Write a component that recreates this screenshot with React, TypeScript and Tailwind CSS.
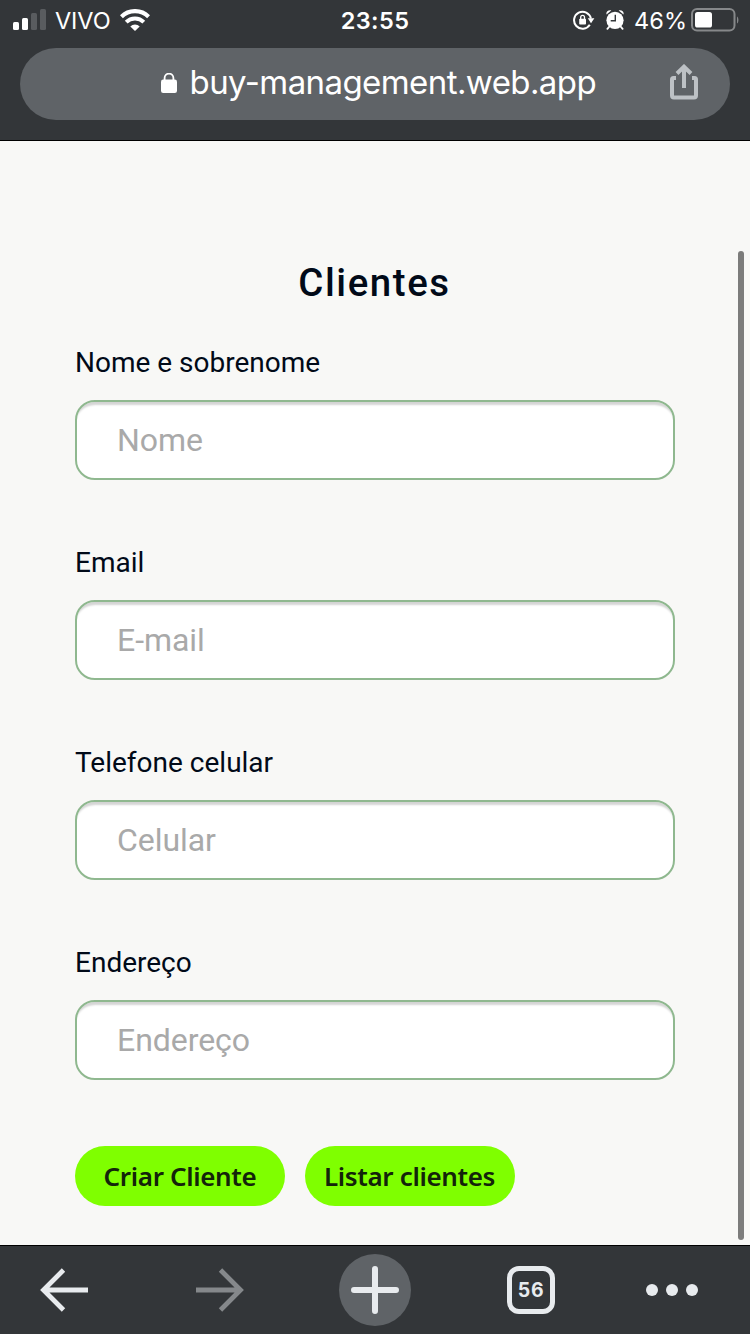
import React from "react";

type FieldProps = { id: string; label: string; placeholder: string };

function Field({ id, label, placeholder }: FieldProps) {
  return (
    <div className="flex h-[200px] flex-col">
      <label htmlFor={id} className="h-[60px] pt-px text-[28px] leading-[44px] whitespace-nowrap text-[#010a18]">
        {label}
      </label>
      <input
        id={id}
        placeholder={placeholder}
        className="h-20 w-[600px] rounded-[20px] border-2 border-[#8fb88f] bg-white px-10 text-[32px] tracking-[-0.05px] shadow-[inset_0_5px_2px_-2px_rgba(0,0,0,0.17)] outline-none placeholder:text-[#a9a9a9]"
      />
    </div>
  );
}

function SignalIcon() {
  return (
    <svg width="34" height="22" viewBox="0 0 34 22" className="shrink-0">
      <rect x="0" y="13" width="6" height="8" rx="1.5" fill="#fff" />
      <rect x="9" y="9" width="6" height="12" rx="1.5" fill="#fff" />
      <rect x="18" y="4" width="6" height="17" rx="1.5" fill="#595c5f" />
      <rect x="27" y="0" width="6" height="21" rx="1.5" fill="#595c5f" />
    </svg>
  );
}

function WifiIcon() {
  return (
    <svg width="30" height="23" viewBox="0 0 30 23" className="shrink-0" fill="none">
      <path d="M1.4 7.700a19.300 19.300 0 0 1 27.200 0" stroke="#fff" strokeWidth="4.200" />
      <path d="M6.200 13.100a12.400 12.400 0 0 1 17.600 0" stroke="#fff" strokeWidth="3.900" />
      <path d="M10.300 17.400a6.600 6.600 0 0 1 9.400 0L15 22.100z" fill="#fff" />
    </svg>
  );
}

function RotationLockIcon() {
  return (
    <svg width="22" height="20" viewBox="0 0 22 20" className="shrink-0" fill="none">
      <path d="M16.8 14.7A8.500 8.500 0 1 1 17.900 8.500" stroke="#fff" strokeWidth="2" />
      <path d="M14.8 8.300h6.600l-3.400 5z" fill="#fff" />
      <rect x="6.200" y="8.700" width="6.800" height="5.800" rx="0.8" fill="#fff" />
      <path d="M7.700 9V7.200a1.900 1.900 0 0 1 3.800 0V9" stroke="#fff" strokeWidth="1.3" />
    </svg>
  );
}

function AlarmIcon() {
  return (
    <svg width="18" height="20" viewBox="0 0 18 20" className="shrink-0" fill="none">
      <circle cx="9" cy="10.300" r="8.600" fill="#fff" />
      <path d="M.500 4.400C-.2 2 1.700-.2 5.300.400zM17.500 4.400C18.200 2 16.300-.2 12.700.400z" fill="#fff" />
      <path d="M3.400 16.500l-2 2.400M14.600 16.500l2 2.400" stroke="#fff" strokeWidth="1.8" strokeLinecap="round" />
      <path d="M9.300 4.700v6H4.700" stroke="#34383b" strokeWidth="1.4" />
    </svg>
  );
}

function BatteryIcon() {
  return (
    <svg width="48" height="24" viewBox="0 0 48 24" className="shrink-0" fill="none">
      <rect x="1" y="1" width="42.500" height="21.500" rx="5" stroke="#86888a" strokeWidth="2" />
      <rect x="4" y="4" width="17" height="15.500" rx="2.600" fill="#fff" />
      <path d="M46 8.500c1.900 1 1.900 6 0 7z" fill="#86888a" />
    </svg>
  );
}

function StatusBar() {
  return (
    <div className="grid h-12 grid-cols-[340px_70px_340px] text-[23.5px] leading-[42px] text-white">
      <div className="flex pl-[13px]">
        <div className="pt-[9px]"><SignalIcon /></div>
        <span className="ml-2 w-[65px] tracking-[-0.1px] whitespace-nowrap">VIVO</span>
        <div className="pt-[9px]"><WifiIcon /></div>
      </div>
      <span className="text-center font-semibold tracking-[0.4px] whitespace-nowrap">23:55</span>
      <div className="flex justify-end pr-[11px]">
        <div className="mr-[11px] pt-[10px]"><RotationLockIcon /></div>
        <div className="pt-[10px]"><AlarmIcon /></div>
        <span className="ml-[10px] w-[57px] tracking-[0.1px] whitespace-nowrap">46%</span>
        <div className="pt-2"><BatteryIcon /></div>
      </div>
    </div>
  );
}

function AddressBar() {
  return (
    <div className="mx-5 flex h-[72px] items-center rounded-full bg-[#5f6367] pl-[141px] text-white">
      <svg width="16" height="20" viewBox="0 0 16 20" className="mb-[2px] shrink-0" fill="none">
        <rect x="0" y="6.500" width="16" height="13.500" rx="2.200" fill="#fff" />
        <path d="M3.600 8V5a4.400 4.400 0 0 1 8.800 0v3" stroke="#fff" strokeWidth="1.8" />
      </svg>
      <span className="mb-1 ml-[12.5px] w-[480.5px] text-[33px] leading-[68px] tracking-[-0.58px] whitespace-nowrap">buy-management.web.app</span>
      <svg width="28" height="36" viewBox="0 0 28 36" className="mr-8 mb-1 shrink-0" fill="none" stroke="#bdc1c5" strokeWidth="4">
        <path d="M6 14H3.500Q2 14 2 15.500V31.500Q2 33.500 4 33.500H24Q26 33.500 26 31.500V15.500Q26 14 24.500 14H22" />
        <path d="M14 24V3M7 9.500L14 2.700L21 9.500" />
      </svg>
    </div>
  );
}

function Toolbar() {
  return (
    <nav className="flex h-[89px] items-center border-t border-black bg-[#333639]">
      <svg width="48" height="44" viewBox="0 0 48 44" className="ml-10 shrink-0" fill="none" stroke="#e8ebee" strokeWidth="4.800">
        <path d="M48 22H4M23.500 2L3.500 22L23.500 42" />
      </svg>
      <svg width="48" height="44" viewBox="0 0 48 44" className="ml-[108px] shrink-0" fill="none" stroke="#85888b" strokeWidth="4.800">
        <path d="M0 22H44M24.500 2L44.500 22L24.500 42" />
      </svg>
      <div className="ml-[95px] flex size-[72px] shrink-0 items-center justify-center rounded-full bg-[#5f6367]">
        <svg width="48" height="48" viewBox="0 0 48 48" fill="none" stroke="#e8ebee" strokeWidth="6" strokeLinecap="round">
          <path d="M24 3V45M3 24H45" />
        </svg>
      </div>
      <div className="ml-24 flex size-12 shrink-0 items-center justify-center rounded-[12px] border-[5px] border-[#e8ebee] pt-px text-[19.5px] font-bold tracking-[0.6px] text-[#e8ebee]">
        56
      </div>
      <svg width="52" height="12" viewBox="0 0 52 12" className="ml-[91px] shrink-0" fill="#e8ebee">
        <circle cx="6" cy="6" r="6" />
        <circle cx="26" cy="6" r="6" />
        <circle cx="46" cy="6" r="6" />
      </svg>
    </nav>
  );
}

export default function App() {
  return (
    <div className="flex h-[1334px] w-[750px] flex-col overflow-hidden bg-[#f8f8f6] font-['Inter',sans-serif]">
      <header className="h-[141px] border-b border-black bg-[#333639]">
        <StatusBar />
        <AddressBar />
      </header>
      <div className="flex h-[1104px] justify-between pr-[6px]">
        <main className="w-[675px] pl-[75px] font-['Roboto',sans-serif]">
          <h1 className="mt-[117px] h-[82px] pr-px text-center text-[38.4px] leading-[50px] font-medium tracking-[1.6px] whitespace-nowrap text-[#010a18]">Clientes</h1>
          <Field id="nome" label="Nome e sobrenome" placeholder="Nome" />
          <Field id="email" label="Email" placeholder="E-mail" />
          <Field id="celular" label="Telefone celular" placeholder="Celular" />
          <Field id="endereco" label="Endereço" placeholder="Endereço" />
          <div className="mt-[6px] flex gap-5 font-['Noto_Sans',sans-serif] text-[26px] font-semibold tracking-[-0.35px] text-[#13240a]">
            <button className="h-[60px] w-[210px] rounded-full bg-[#7fff00] leading-[60px] whitespace-nowrap">Criar Cliente</button>
            <button className="h-[60px] w-[210px] rounded-full bg-[#7fff00] pr-px leading-[60px] whitespace-nowrap">Listar clientes</button>
          </div>
        </main>
        <div className="mt-[110px] h-[989px] w-[6px] rounded-full bg-[#7c7c7b]" />
      </div>
      <Toolbar />
    </div>
  );
}
